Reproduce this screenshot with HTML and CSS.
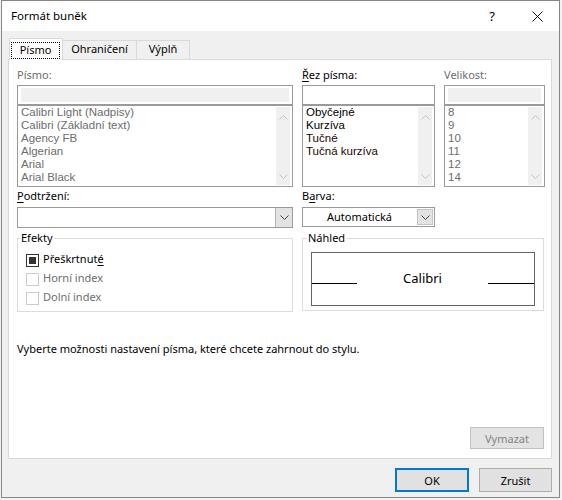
FILE: index.html
```html
<!DOCTYPE html>
<html lang="cs">
<head>
<meta charset="utf-8">
<title>Formát buněk</title>
<link rel="stylesheet" href="styles.css">
</head>
<body>
<div class="window">
  <div class="titlebar">
    <div class="title">Formát buněk</div>
    <div class="tb-btn help">?</div>
    <div class="tb-btn close"><svg width="11" height="11" viewBox="0 0 11 11"><path d="M0.5 0.5L10.5 10.5M10.5 0.5L0.5 10.5" stroke="#111" stroke-width="1" fill="none"/></svg></div>
  </div>
  <div class="tabs">
    <div class="tab active"><span class="focus">Písmo</span></div>
    <div class="tab t2">Ohraničení</div>
    <div class="tab t3">Výplň</div>
  </div>
  <div class="panel">
    <div class="fonts">
      <div class="col w1">
        <div class="label gray">Písmo:</div>
        <div class="input dis"><div class="fill"></div></div>
        <div class="list">
          <div class="items gray">
            <div>Calibri Light (Nadpisy)</div>
            <div>Calibri (Základní text)</div>
            <div>Agency FB</div>
            <div>Algerian</div>
            <div>Arial</div>
            <div>Arial Black</div>
          </div>
          <div class="sb">
            <svg width="9" height="5" viewBox="0 0 9 5"><path d="M0.5 4.5L4.5 0.5L8.5 4.5" fill="none" stroke="#c4c4c4"/></svg>
            <svg width="9" height="5" viewBox="0 0 9 5"><path d="M0.5 0.5L4.5 4.5L8.5 0.5" fill="none" stroke="#c4c4c4"/></svg>
          </div>
        </div>
      </div>
      <div class="col w2">
        <div class="label"><u>Ř</u>ez písma:</div>
        <div class="input"></div>
        <div class="list">
          <div class="items">
            <div>Obyčejné</div>
            <div>Kurzíva</div>
            <div class="dark">Tučné</div>
            <div class="dark">Tučná kurzíva</div>
          </div>
          <div class="sb">
            <svg width="9" height="5" viewBox="0 0 9 5"><path d="M0.5 4.5L4.5 0.5L8.5 4.5" fill="none" stroke="#c4c4c4"/></svg>
            <svg width="9" height="5" viewBox="0 0 9 5"><path d="M0.5 0.5L4.5 4.5L8.5 0.5" fill="none" stroke="#c4c4c4"/></svg>
          </div>
        </div>
      </div>
      <div class="col w3">
        <div class="label gray">Velikost:</div>
        <div class="input dis"><div class="fill"></div></div>
        <div class="list">
          <div class="items gray">
            <div>8</div>
            <div>9</div>
            <div>10</div>
            <div>11</div>
            <div>12</div>
            <div>14</div>
          </div>
          <div class="sb">
            <svg width="9" height="5" viewBox="0 0 9 5"><path d="M0.5 4.5L4.5 0.5L8.5 4.5" fill="none" stroke="#c4c4c4"/></svg>
            <svg width="9" height="5" viewBox="0 0 9 5"><path d="M0.5 0.5L4.5 4.5L8.5 0.5" fill="none" stroke="#c4c4c4"/></svg>
          </div>
        </div>
      </div>
    </div>

    <div class="row2">
      <div class="col w1">
        <div class="label"><u>P</u>odtržení:</div>
        <div class="combo c-under">
          <div class="combo-val"></div>
          <div class="combo-btn"><svg width="9" height="5" viewBox="0 0 9 5"><path d="M0.5 0.5L4.5 4.5L8.5 0.5" fill="none" stroke="#444"/></svg></div>
        </div>
      </div>
      <div class="col w2">
        <div class="label">B<u>a</u>rva:</div>
        <div class="combo c-color">
          <div class="combo-val">Automatická</div>
          <div class="combo-btn"><svg width="9" height="5" viewBox="0 0 9 5"><path d="M0.5 0.5L4.5 4.5L8.5 0.5" fill="none" stroke="#444"/></svg></div>
        </div>
      </div>
    </div>

    <div class="row3">
      <fieldset class="group effects">
        <legend>Efekty</legend>
        <div class="checks">
          <div class="check"><span class="cb on"></span><span class="cl">Přeškrtnut<u>é</u></span></div>
          <div class="check off"><span class="cb"></span><span class="cl">Horní index</span></div>
          <div class="check off"><span class="cb"></span><span class="cl">Dolní index</span></div>
        </div>
      </fieldset>
      <fieldset class="group preview">
        <legend>Náhled</legend>
        <div class="pbox">
          <div class="prow">
            <div class="pline l"></div>
            <div class="ptext">Calibri</div>
            <div class="pline r"></div>
          </div>
        </div>
      </fieldset>
    </div>

    <div class="desc">Vyberte možnosti nastavení písma, které chcete zahrnout do stylu.</div>
    <div class="spacer"></div>
    <div class="btn clear">Vymazat</div>
  </div>
  <div class="footer">
    <div class="btn ok">OK</div>
    <div class="btn cancel">Zrušit</div>
  </div>
</div>
</body>
</html>
```

FILE: styles.css
```css
* { box-sizing: border-box; }
html, body { margin: 0; padding: 0; }
body {
  width: 562px;
  height: 500px;
  overflow: hidden;
  background: #f3f3f3;
  font-family: "Noto Sans", "Open Sans", sans-serif;
  font-size: 11px;
  color: #000;
}
u { text-decoration: underline; text-underline-offset: 2px; }

.window {
  margin-left: 1px;
  width: 559px;
  height: 498px;
  border: 1px solid #868686;
  background: #f0f0f0;
  display: flex;
  flex-direction: column;
}

.titlebar {
  flex: none;
  height: 30px;
  background: #fff;
  display: flex;
  align-items: center;
}
.title { flex: 1; padding-left: 9px; line-height: 14px; font-size: 11.5px; }
.tb-btn {
  height: 30px;
  display: flex;
  align-items: center;
  justify-content: center;
}
.help { width: 46px; font-size: 13px; }
.close { width: 44px; }

.tabs {
  flex: none;
  height: 28px;
  display: flex;
  align-items: flex-end;
  padding-left: 7px;
}
.tab {
  height: 19px;
  border: 1px solid #d9d9d9;
  border-bottom: none;
  background: #f0f0f0;
  text-align: center;
  line-height: 14px;
  padding-top: 1px;
}
.tab.active {
  position: relative;
  z-index: 1;
  width: 54px;
  height: 22px;
  margin-bottom: -1px;
  background: #fff;
  padding: 3px 2px 0 1px;
}
.focus {
  display: block;
  width: 49px;
  height: 17px;
  border: 1px dotted #000;
  line-height: 14px;
  text-align: center;
}
.t2 { width: 75px; margin-left: -1px; }
.t3 { width: 54px; margin-left: -1px; }

.panel {
  flex: none;
  height: 400px;
  margin: 0 7px 0 6px;
  background: #fff;
  border: 1px solid #d9d9d9;
  padding: 8px 6px 9px 8px;
  display: flex;
  flex-direction: column;
}

.fonts { display: flex; gap: 9px; }
.col { display: flex; flex-direction: column; }
.w1 { width: 276px; }
.w2 { width: 133px; }
.w3 { width: 101px; }

.label { line-height: 14px; height: 14px; margin-bottom: 3px; }
.gray { color: #6d6d6d; }

.input {
  height: 20px;
  border: 1px solid #9a9a9a;
  background: #fff;
  padding: 2px 3px;
}
.input .fill { height: 100%; background: #f0f0f0; }

.list {
  height: 82px;
  border: 1px solid #9a9a9a;
  display: flex;
  overflow: hidden;
}
.items {
  flex: 1;
  padding-left: 3px;
  font-family: "Liberation Sans", Arial, sans-serif;
  font-size: 11.5px;
  line-height: 13px;
  white-space: nowrap;
  overflow: hidden;
}
.items .dark { color: #1e0505; }
.sb {
  width: 14px;
  margin: 1px 2px 1px 0;
  background: #f0f0f0;
  display: flex;
  flex-direction: column;
  justify-content: space-between;
  align-items: center;
  padding: 8px 0 6px;
}
.sb svg { display: block; }

.row2 { display: flex; gap: 9px; margin-top: 2px; }
.row2 .label { margin-bottom: 4px; }

.combo {
  display: flex;
  border: 1px solid #9a9a9a;
  background: #fff;
}
.c-under { height: 21px; }
.c-color { height: 20px; }
.combo-val { flex: 1; text-align: center; line-height: 17px; }
.combo-btn {
  width: 16px;
  margin: 1px;
  background: #e3e3e3;
  border: 1px solid #c4c4c4;
  display: flex;
  align-items: center;
  justify-content: center;
}
.c-under .combo-btn { width: 17px; margin: 0; border-width: 0 0 0 1px; border-color: #b5b5b5; }

.row3 { display: flex; gap: 9px; margin-top: 3px; }
.group {
  margin: 0;
  padding: 0;
  min-width: 0;
  border: 1px solid #dcdcdc;
}
.group legend { padding: 0 1px; line-height: 14px; }
.effects { width: 276px; height: 81px; }
.effects legend { margin-left: 2px; }
.preview { width: 242px; height: 80px; }
.preview legend { margin-left: 4px; }

.checks { padding-top: 6px; padding-left: 8px; }
.check { height: 19px; display: flex; align-items: center; }
.cb {
  width: 13px;
  height: 13px;
  border: 1px solid #333;
  background: #fff;
  display: flex;
  align-items: center;
  justify-content: center;
  flex: none;
}
.cb.on::after { content: ""; width: 7px; height: 7px; background: #333; }
.cl { margin-left: 4px; line-height: 14px; padding-bottom: 3px; }
.check.off .cb { border-color: #cccccc; }
.check.off .cl { color: #6d6d6d; }

.pbox {
  margin: 7px 8px 0;
  height: 54px;
  border: 1px solid #646464;
}
.prow { height: 31px; display: flex; align-items: flex-end; }
.pline { height: 1px; background: #000; flex: none; }
.pline.l { width: 45px; }
.pline.r { width: 46px; }
.ptext { flex: 1; text-align: center; font-size: 13px; line-height: 16px; margin-bottom: -2px; }

.desc { margin-top: 30px; line-height: 14px; }
.spacer { flex: 1; }

.btn {
  display: flex;
  align-items: center;
  justify-content: center;
  background: #e1e1e1;
  border: 1px solid #adadad;
}
.clear {
  align-self: flex-end;
  width: 74px;
  height: 22px;
  margin-right: 1px;
  background: #e3e3e3;
  border-color: #c2c2c2;
  color: #838383;
}
.footer {
  flex: none;
  display: flex;
  justify-content: flex-end;
  gap: 10px;
  padding-right: 7px;
  margin-top: 9px;
}
.ok { width: 74px; height: 24px; border: 2px solid #0078d7; }
.cancel { width: 73px; height: 24px; }
```
